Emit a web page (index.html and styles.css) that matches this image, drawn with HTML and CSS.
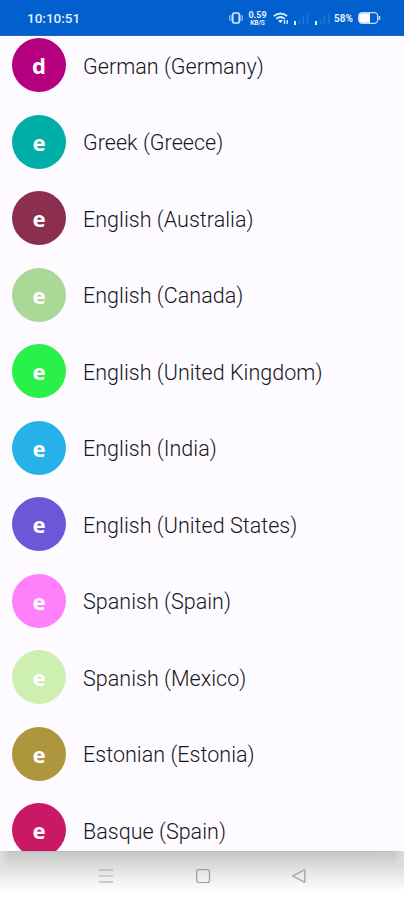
FILE: index.html
```html
<!DOCTYPE html>
<html lang="en">
<head>
<meta charset="utf-8">
<title>Languages</title>
<link rel="stylesheet" href="styles.css">
</head>
<body>
<header class="status">
  <span class="clock">10:10:51</span>
  <svg class="vibrate" width="14" height="12" viewBox="0 0 14 12" fill="none" stroke="#dcebff"><rect x="3.8" y="1" width="6.4" height="10" rx="1.2" stroke-width="1.5"/><path d="M.7 3.5v5M13.3 3.5v5M2.2 2.5v7M11.8 2.5v7" stroke-width=".7"/></svg>
  <span class="speed"><b>0.59</b><i>KB/S</i></span>
  <svg class="wifi" width="16" height="13" viewBox="0 0 16 13" fill="none" stroke="#dcebff" stroke-width="1.7"><path d="M.8 4.2Q7.5-1.2 14.2 4.2M3.2 6.8q4.3-3.6 8.6 0"/><path d="M5.2 8.7q2.3-1.8 4.6 0L7.5 11z" fill="#dcebff" stroke="none"/><path d="M11.5 12V8m2.7 0v4" stroke-width="1.3"/></svg>
  <svg class="signal" width="16" height="13" viewBox="0 0 16 13"><path fill="#e8f2ff" d="M0 9h2v4H0z"/><path fill="#1f74d8" d="M4.500 7h1.800v5H4.500zM8.500 4h1.800v8H8.500zM12.700 1h1.800v11h-1.800z"/></svg>
  <svg class="signal second" width="16" height="13" viewBox="0 0 16 13"><path fill="#e8f2ff" d="M0 9h2v4H0z"/><path fill="#1f74d8" d="M4.500 7h1.800v5H4.500zM8.500 4h1.800v8H8.500zM12.700 1h1.800v11h-1.800z"/></svg>
  <span class="percent">58%</span>
  <svg class="battery" width="23" height="12" viewBox="0 0 23 12"><rect x=".7" y=".7" width="19" height="10.600" rx="3.500" fill="none" stroke="#c5dcfa" stroke-width="1.300"/><path d="M3.500 1.200H12v9.600H3.500Q1.200 10.800 1.200 8V4q0-2.800 2.300-2.800z" fill="#fff"/><path d="M21.500 4v4" stroke="#c5dcfa" stroke-width="1.500"/></svg>
</header>
<main class="list">
  <div class="row"><span class="badge magenta">d</span><span class="name">German (Germany)</span></div>
  <div class="row"><span class="badge teal">e</span><span class="name">Greek (Greece)</span></div>
  <div class="row"><span class="badge maroon">e</span><span class="name">English (Australia)</span></div>
  <div class="row"><span class="badge sage">e</span><span class="name">English (Canada)</span></div>
  <div class="row"><span class="badge green">e</span><span class="name">English (United Kingdom)</span></div>
  <div class="row"><span class="badge blue">e</span><span class="name">English (India)</span></div>
  <div class="row"><span class="badge violet">e</span><span class="name">English (United States)</span></div>
  <div class="row"><span class="badge pink">e</span><span class="name">Spanish (Spain)</span></div>
  <div class="row"><span class="badge lime">e</span><span class="name">Spanish (Mexico)</span></div>
  <div class="row"><span class="badge olive">e</span><span class="name">Estonian (Estonia)</span></div>
  <div class="row"><span class="badge crimson">e</span><span class="name">Basque (Spain)</span></div>
</main>
<nav class="nav">
  <svg width="16" height="16" viewBox="0 0 16 16" fill="none" stroke="#9fa09f" stroke-width="1.200"><path d="M1 2h14M1 14h14"/><path d="M1 8h14" stroke="#bcbdbc"/></svg>
  <svg width="16" height="16" viewBox="0 0 16 16" fill="none" stroke="#9b9c9b" stroke-width="1.200"><rect x="1.700" y="1.700" width="12.800" height="12.800" rx="2"/></svg>
  <svg width="16" height="16" viewBox="0 0 16 16" fill="none" stroke="#9b9c9b" stroke-width="1.200" stroke-linejoin="round"><path d="M1.500 8L13.800 1.800v12.400z"/></svg>
</nav>
</body>
</html>
```
FILE: styles.css
```css
* { box-sizing: border-box; }
body {
  margin: 0;
  width: 404px;
  height: 900px;
  overflow: hidden;
  display: flex;
  flex-direction: column;
  background: #fdfbff;
  font-family: Roboto, sans-serif;
}
.status {
  flex: none;
  height: 36px;
  background: #0160ce;
  border-bottom: 1px solid #2765ba;
  display: flex;
  align-items: center;
  padding: 1px 0 0 27px;
  color: #e4efff;
}
.clock {
  width: 202px;
  font: 500 13.5px/16px Roboto, sans-serif;
}
.speed {
  width: 19px;
  margin-left: 5px;
  display: flex;
  flex-direction: column;
  align-items: center;
  font-size: 9px;
  line-height: 10px;
}
.speed i {
  font-style: normal;
  font-weight: 700;
  font-size: 6.5px;
  line-height: 7px;
}
.wifi { margin-left: 6px; }
.signal { margin-left: 5px; }
.second { margin-left: 5px; }
.percent {
  width: 21px;
  margin-left: 3px;
  font-size: 10px;
  font-weight: 700;
}
.battery { margin-left: 3px; }
.list {
  flex: none;
  height: 815px;
  overflow: hidden;
  padding: 2px 0 0 12px;
  display: flex;
  flex-direction: column;
  gap: 22.5px;
}
.row {
  flex: none;
  height: 54px;
  display: flex;
  align-items: center;
  gap: 17px;
}
.badge {
  width: 54px;
  height: 54px;
  border-radius: 50%;
  text-align: center;
  color: #fff;
  font: 700 22px/54px "Noto Sans", sans-serif;
}
.name {
  font-size: 21.5px;
  font-weight: 300;
  line-height: 28px;
  padding-top: 3px;
  letter-spacing: 0.03px;
  color: #17171a;
  white-space: nowrap;
}
.magenta { background: #b5007f; }
.teal { background: #00afa7; }
.maroon { background: #8b2e50; }
.sage { background: #aad897; }
.green { background: #29f04b; }
.blue { background: #26b1e8; }
.violet { background: #6d57d9; }
.pink { background: #ff80fb; }
.lime { background: #cdf0b0; }
.olive { background: #ae963c; }
.crimson { background: #c91965; }
.nav {
  flex: 1;
  padding: 0 97px 0 98px;
  display: flex;
  align-items: center;
  justify-content: space-between;
  background:
    linear-gradient(90deg, transparent, rgba(150, 155, 153, 0.28) 16px, rgba(150, 155, 153, 0.28) 374px, transparent) 7px 0 / 390px 1px no-repeat,
    linear-gradient(90deg, rgba(225, 227, 226, 0.8), transparent 10px, transparent 394px, rgba(225, 227, 226, 0.8)) 0 0 / 404px 15px no-repeat,
    linear-gradient(#c6c8c7, #d0d2d1 8px, #e3e4e4 20px, #f4f4f4 32px, #fff 42px);
}
```
